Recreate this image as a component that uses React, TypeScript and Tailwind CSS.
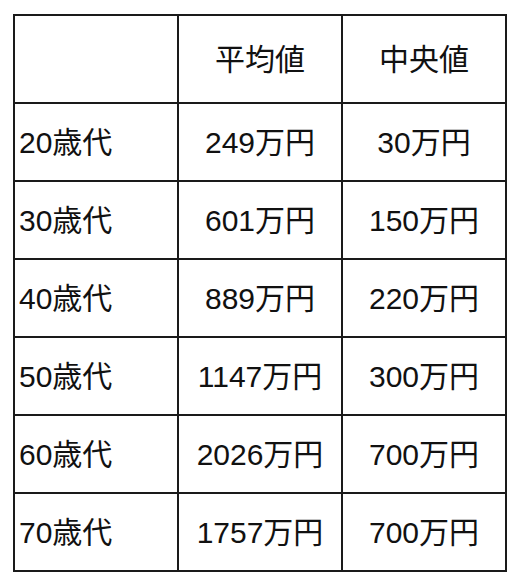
import { Fragment } from "react";

const rows = [
  { age: "20歳代", mean: "249万円", median: "30万円" },
  { age: "30歳代", mean: "601万円", median: "150万円" },
  { age: "40歳代", mean: "889万円", median: "220万円" },
  { age: "50歳代", mean: "1147万円", median: "300万円" },
  { age: "60歳代", mean: "2026万円", median: "700万円" },
  { age: "70歳代", mean: "1757万円", median: "700万円" },
];

export default function App() {
  return (
    <div
      className="w-[518px] h-[580px] bg-white pl-[13px] pt-[14px] text-[30px] text-[#111]"
      style={{ fontFamily: '"Liberation Sans", "Noto Sans CJK JP", sans-serif' }}
    >
      <div className="grid grid-cols-[164px_164px_164px] w-fit border-l-2 border-t-2 border-[#1a1a1a]">
        {/* Header */}
        <div className="h-[88px] border-r-2 border-b-2 border-[#1a1a1a]" />
        <div className="h-[88px] border-r-2 border-b-2 border-[#1a1a1a] flex items-center justify-center">
          平均値
        </div>
        <div className="h-[88px] border-r-2 border-b-2 border-[#1a1a1a] flex items-center justify-center">
          中央値
        </div>

        {rows.map((r) => (
          <Fragment key={r.age}>
            <div className="h-[78px] border-r-2 border-b-2 border-[#1a1a1a] flex items-center pl-[4px]">
              {r.age}
            </div>
            <div className="h-[78px] border-r-2 border-b-2 border-[#1a1a1a] flex items-center justify-center">
              {r.mean}
            </div>
            <div className="h-[78px] border-r-2 border-b-2 border-[#1a1a1a] flex items-center justify-center">
              {r.median}
            </div>
          </Fragment>
        ))}
      </div>
    </div>
  );
}
